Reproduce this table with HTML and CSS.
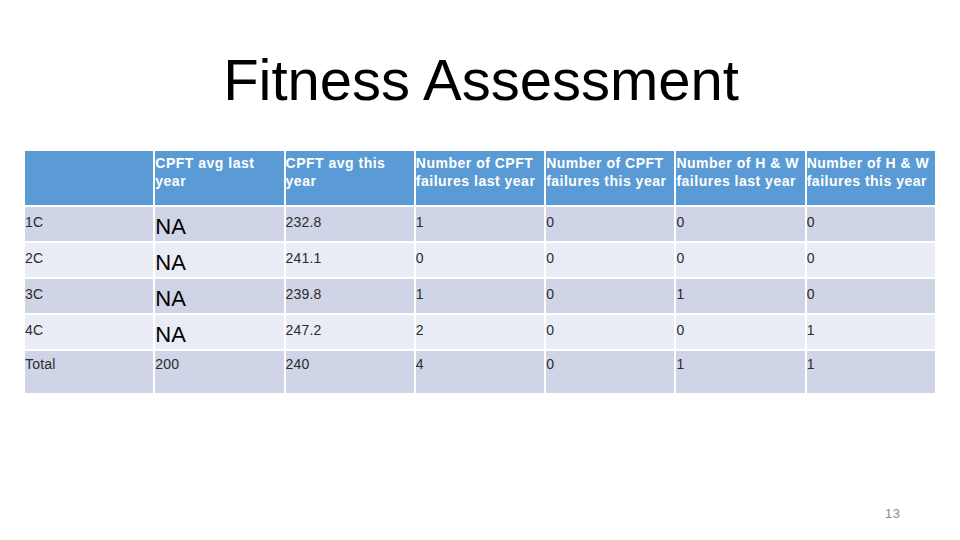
FILE: index.html
```html
<!DOCTYPE html>
<html>
<head>
<meta charset="utf-8">
<link rel="stylesheet" href="styles.css">
</head>
<body>
<div class="slide">
  <h1 class="title">Fitness Assessment</h1>
  <table class="grid">
    <thead>
      <tr>
        <th></th>
        <th>CPFT avg last year</th>
        <th>CPFT avg this year</th>
        <th>Number of CPFT failures last year</th>
        <th>Number of CPFT failures this year</th>
        <th>Number of H &amp; W failures last year</th>
        <th>Number of H &amp; W failures this year</th>
      </tr>
    </thead>
    <tbody>
      <tr class="odd"><td class="lbl">1C</td><td class="na">NA</td><td class="avg">232.8</td><td>1</td><td>0</td><td>0</td><td>0</td></tr>
      <tr class="even"><td class="lbl">2C</td><td class="na">NA</td><td class="avg">241.1</td><td>0</td><td>0</td><td>0</td><td>0</td></tr>
      <tr class="odd"><td class="lbl">3C</td><td class="na">NA</td><td class="avg">239.8</td><td>1</td><td>0</td><td>1</td><td>0</td></tr>
      <tr class="even"><td class="lbl">4C</td><td class="na">NA</td><td class="avg">247.2</td><td>2</td><td>0</td><td>0</td><td>1</td></tr>
      <tr class="odd total"><td class="lbl">Total</td><td>200</td><td>240</td><td>4</td><td>0</td><td>1</td><td>1</td></tr>
    </tbody>
  </table>
  <div class="footer"><span class="pagenum">13</span></div>
</div>
</body>
</html>
```

FILE: styles.css
```css
html, body {
  margin: 0;
  padding: 0;
  background: #ffffff;
}

.slide {
  width: 960px;
  height: 540px;
  position: relative;
  overflow: hidden;
  font-family: "Liberation Sans", Arial, sans-serif;
}

.title {
  margin: 0;
  padding-top: 51px;
  font-family: "Liberation Sans", Arial, sans-serif;
  font-weight: normal;
  font-size: 58px;
  line-height: 58px;
  color: #000000;
  text-align: center;
  padding-left: 2px;
}

.grid {
  margin: 40px 0 0 23px;
  width: 914px;
  border-collapse: separate;
  border-spacing: 2px;
  table-layout: fixed;
}

.grid th {
  background: #5b9bd5;
  color: #ffffff;
  font-weight: bold;
  font-size: 14px;
  line-height: 18px;
  letter-spacing: 0.5px;
  text-align: left;
  vertical-align: top;
  padding: 3px 0 0 0;
  height: 51px;
}

.grid td {
  font-size: 14px;
  line-height: 18px;
  color: #2b2b2b;
  letter-spacing: 0.2px;
  text-align: left;
  vertical-align: top;
  padding: 6px 0 0 0;
  height: 28px;
}

.grid tr.odd td {
  background: #cfd5e6;
}

.grid tr.even td {
  background: #e9ecf4;
}

.grid td.na {
  font-size: 22px;
  line-height: 24px;
  color: #000000;
  letter-spacing: 0;
  padding-top: 8px;
  height: 26px;
}

.grid tr.total td {
  height: 38px;
  padding-top: 4px;
}

.footer {
  position: absolute;
  left: 0;
  top: 505px;
  width: 960px;
}

.pagenum {
  position: absolute;
  left: 885px;
  top: 0;
  font-size: 13px;
  line-height: 18px;
  color: #8a8a8a;
  letter-spacing: 0.5px;
}
```
